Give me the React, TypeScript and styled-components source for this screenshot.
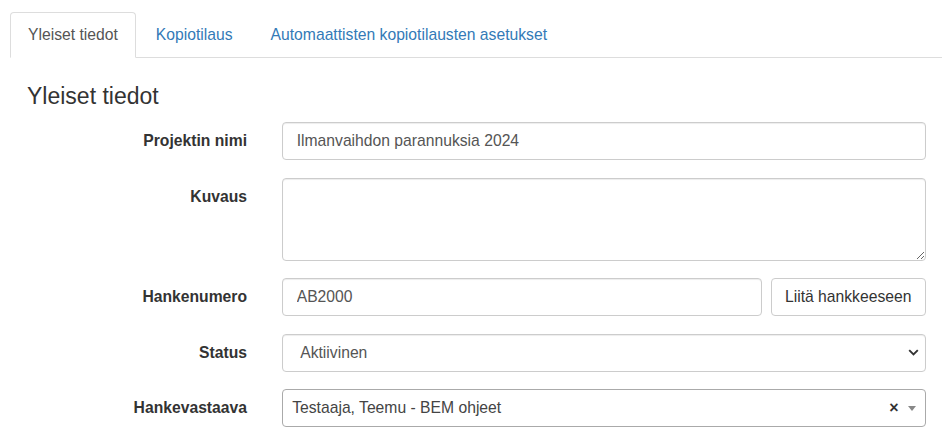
import React from "react";
import styled, { createGlobalStyle } from "styled-components";

const Global = createGlobalStyle`
  html, body { margin: 0; padding: 0; background: #fff; }
  body {
    font-family: "Liberation Sans", Arial, Helvetica, sans-serif;
    font-size: 15.7px;
    line-height: 22.4px;
    color: #333;
  }
  * { box-sizing: border-box; }
`;

const Page = styled.div`
  padding: 12px 0 0 10px;
`;

const TabBar = styled.ul`
  display: flex;
  list-style: none;
  margin: 0;
  padding: 0;
  border-bottom: 1px solid #ddd;
`;

const Tab = styled.li<{ $active?: boolean }>`
  margin-bottom: -1px;
  margin-right: 2px;
  padding: 11px 17px;
  line-height: 22.4px;
  border: 1px solid ${(p) => (p.$active ? "#ddd" : "transparent")};
  border-bottom-color: ${(p) => (p.$active ? "#fff" : "transparent")};
  border-radius: 4px 4px 0 0;
  background: ${(p) => (p.$active ? "#fff" : "transparent")};
  color: ${(p) => (p.$active ? "#555" : "#337ab7")};
  cursor: pointer;
`;

const Content = styled.div`
  padding: 0 16.3px 0 17px;
`;

const Heading = styled.h3`
  margin: 26px 0 12.6px;
  font-size: 23px;
  font-weight: 500;
  line-height: 25.3px;
  color: #333;
`;

const Form = styled.form`
  display: flex;
  flex-direction: column;
  gap: 17.4px;
`;

const Row = styled.div`
  display: grid;
  grid-template-columns: 220px 1fr;
  column-gap: 34.7px;
  align-items: start;
`;

const Label = styled.label`
  text-align: right;
  font-weight: 700;
  padding-top: 7.7px;
  line-height: 22.4px;
  color: #333;
`;

const controlBase = `
  width: 100%;
  font-family: inherit;
  font-size: 15.7px;
  line-height: 22.4px;
  color: #555;
  background: #fff;
  border: 1px solid #ccc;
  border-radius: 4px;
  box-shadow: inset 0 1px 1px rgba(0,0,0,.075);
  outline: none;
`;

const Input = styled.input`
  ${controlBase}
  height: 38.2px;
  padding: 7px 14px;
`;

const TextArea = styled.textarea`
  ${controlBase}
  display: block;
  height: 83px;
  padding: 7px 14px;
  resize: vertical;
`;

const InputGroup = styled.div`
  display: flex;
  gap: 9px;
`;

const Button = styled.button`
  flex: none;
  width: 155px;
  height: 37.8px;
  font-family: inherit;
  font-size: 15.7px;
  color: #333;
  background: #fff;
  border: 1px solid #ccc;
  border-radius: 4px;
  padding: 0 8px;
  cursor: pointer;
`;

const SelectBox = styled.div`
  ${controlBase}
  height: 37.8px;
  display: flex;
  align-items: center;
  justify-content: space-between;
  padding: 0 6px 0 17.5px;
`;

const Select2Box = styled.div`
  height: 37.8px;
  display: flex;
  align-items: center;
  border: 1px solid #aaa;
  border-radius: 4px;
  background: #fff;
  padding: 0 0 0 9.5px;
  color: #444;
  font-size: 15.7px;
`;

const Select2Text = styled.span`
  flex: 1;
`;

const ClearX = styled.span`
  font-weight: 700;
  color: #333;
  font-size: 16px;
  margin-right: 9px;
  margin-top: 1px;
`;

const Arrow = styled.span`
  width: 0;
  height: 0;
  border-left: 4px solid transparent;
  border-right: 4px solid transparent;
  border-top: 5px solid #888;
  margin-right: 9px;
  margin-top: 2px;
`;

export default function App() {
  return (
    <>
      <Global />
      <Page>
        <TabBar>
          <Tab $active>Yleiset tiedot</Tab>
          <Tab>Kopiotilaus</Tab>
          <Tab>Automaattisten kopiotilausten asetukset</Tab>
        </TabBar>
        <Content>
          <Heading>Yleiset tiedot</Heading>
          <Form>
            <Row>
              <Label>Projektin nimi</Label>
              <Input defaultValue="Ilmanvaihdon parannuksia 2024" />
            </Row>
            <Row>
              <Label>Kuvaus</Label>
              <TextArea />
            </Row>
            <Row>
              <Label>Hankenumero</Label>
              <InputGroup>
                <Input defaultValue="AB2000" />
                <Button type="button">Liitä hankkeeseen</Button>
              </InputGroup>
            </Row>
            <Row>
              <Label>Status</Label>
              <SelectBox>
                <span>Aktiivinen</span>
                <svg width="11" height="7" viewBox="0 0 11 7">
                  <path d="M1.2 1.2 L5.5 5.5 L9.8 1.2" fill="none" stroke="#333" strokeWidth="1.9" />
                </svg>
              </SelectBox>
            </Row>
            <Row>
              <Label>Hankevastaava</Label>
              <Select2Box>
                <Select2Text>Testaaja, Teemu - BEM ohjeet</Select2Text>
                <ClearX>×</ClearX>
                <Arrow />
              </Select2Box>
            </Row>
          </Form>
        </Content>
      </Page>
    </>
  );
}
